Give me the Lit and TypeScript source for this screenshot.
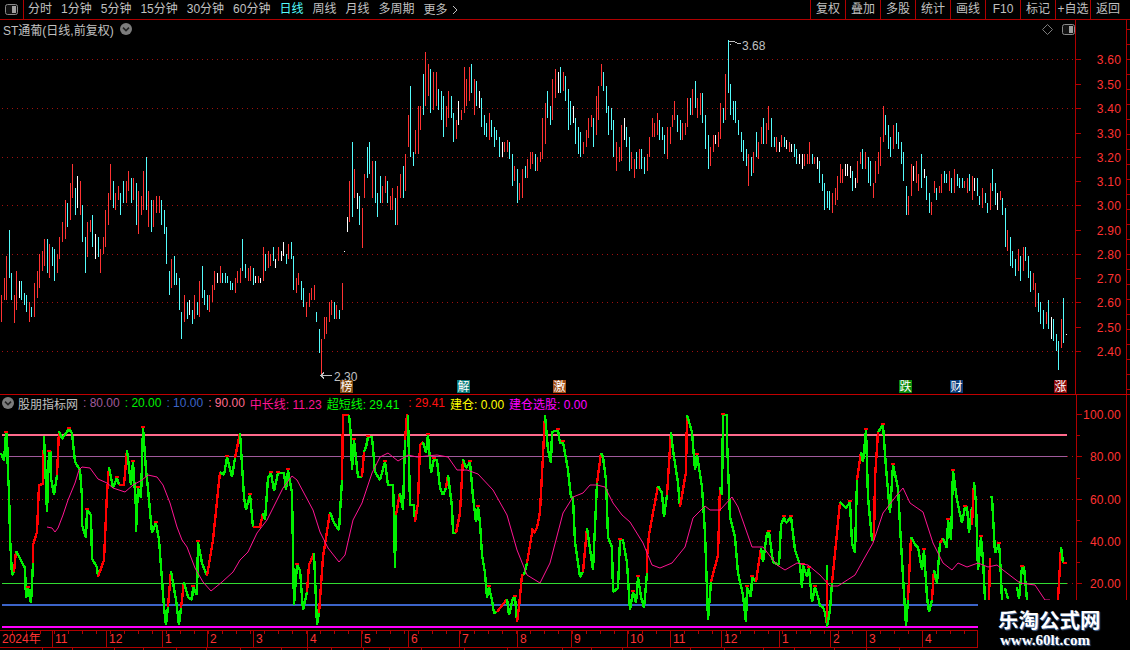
import { css, html, svg, LitElement } from "lit";
import { customElement } from "lit/decorators.js";

const BAR_COLORS: Record<string, string> = { r: "#ff3232", c: "#54fcfc", w: "#ffffff" };

// price bars as <colour>x,top,bottom in page pixels
const BARS = `r1,295,322 r4,278,300 r6,256,300 c9,230,278 c11,273,300 r14,295,323 r16,271,310 w19,281,298 c21,281,300 c24,293,305 c26,295,312 r29,302,322 c31,307,317 r34,283,317 r37,271,298 r39,254,288 r42,251,271 r44,239,266 c47,239,273 r49,244,278 c52,247,266 c54,249,281 r57,254,273 r59,237,259 r62,222,242 r65,200,239 c67,203,227 r70,183,220 r72,164,198 c75,188,215 w77,176,208 r80,181,215 c82,205,242 c85,237,273 r87,222,257 r90,220,232 c92,215,247 w95,234,259 c98,237,257 r100,249,273 r103,237,254 r105,210,247 r108,193,225 r110,164,200 c113,181,208 r115,193,210 r118,186,200 c120,193,215 c123,181,203 r126,181,203 r128,171,191 c131,178,203 r133,178,200 c136,183,225 r138,191,234 r141,196,215 r143,171,210 c146,157,210 r148,191,227 c151,200,232 r153,200,227 r156,196,213 r159,196,213 c161,200,225 c164,210,234 c166,227,264 c169,271,295 r171,259,288 c174,256,285 c176,273,285 c179,278,310 c181,312,339 r184,295,322 c187,302,319 w189,300,315 c192,310,324 r194,295,319 c197,302,315 r199,281,317 c202,266,298 c204,290,305 c207,295,310 r209,295,312 r212,285,302 r214,271,290 w217,273,283 r220,266,283 c222,273,283 c225,273,283 c227,276,283 c230,281,290 c232,283,290 r235,278,293 r237,271,283 r240,268,283 c242,239,271 c245,264,278 r248,268,281 r250,266,281 c253,268,285 w255,276,283 r258,276,283 w260,278,283 r263,247,281 c265,254,271 r268,251,268 r270,254,266 c273,247,261 w275,259,268 r278,247,261 w281,251,261 w283,242,256 c286,254,264 r288,244,259 c291,242,259 c293,256,290 r296,278,293 r298,273,285 c301,281,300 c303,288,307 r306,302,317 r309,293,307 r311,288,300 r314,285,300 c316,312,322 c319,329,353 r321,339,377 r324,317,339 r326,317,334 r329,302,322 r331,300,315 c334,302,319 r336,305,319 c339,310,319 r342,283,310 w344,251,252 w347,217,232 r349,181,222 c352,142,217 r354,169,198 w357,193,209 c359,196,225 r362,208,248 r364,174,198 c367,147,178 c369,142,174 r372,161,198 c375,161,203 c377,193,217 c380,176,203 r382,186,203 r385,176,193 c387,181,203 r390,196,210 r392,188,210 c395,198,225 r397,186,225 r400,174,198 c403,166,198 r405,154,191 r408,115,147 c410,86,157 c413,152,166 r415,130,154 r418,106,154 r420,106,130 c423,74,115 r425,52,106 r428,64,96 c430,69,113 r433,72,110 r436,72,106 c438,89,110 c441,91,120 c443,96,137 r446,106,127 r448,91,118 c451,96,118 c453,113,142 r456,120,139 w458,101,125 r461,110,120 r464,67,113 r466,79,106 r469,67,101 c471,64,93 r474,79,115 c476,81,106 w479,91,108 c481,98,127 c484,115,135 c486,123,137 r489,113,140 c491,120,137 c494,127,147 c496,130,140 c499,137,157 w502,142,157 r504,142,152 r507,140,152 c509,142,159 c512,154,186 r514,166,181 c517,169,203 r519,183,200 r522,169,198 c525,166,178 r527,159,178 r530,152,169 r532,152,164 c535,154,171 r537,157,171 r540,152,162 r542,118,159 r545,103,144 c547,91,118 c550,106,125 r552,79,120 r555,69,98 w558,72,93 c560,67,93 r563,72,91 c565,76,101 c568,89,130 c570,101,125 w573,106,123 c575,118,144 c578,127,154 c580,132,157 r583,142,154 r586,130,147 r588,118,138 r591,115,127 c593,118,147 r596,96,135 r598,86,120 r601,64,86 c603,72,91 c606,86,113 c608,106,135 c611,108,130 c613,120,157 r616,142,171 r619,147,162 r621,125,161 w624,118,140 c626,127,147 c629,137,171 r631,152,169 r634,159,178 c636,152,169 r639,149,169 c641,149,169 c644,157,174 r647,154,171 r649,137,157 r652,118,137 r654,123,137 r657,113,135 c659,120,140 c662,127,140 c664,135,154 r667,127,159 r670,127,144 r672,115,127 r674,101,120 c677,115,132 c680,120,140 r682,123,140 r685,123,135 r687,98,127 c690,98,115 r692,89,115 c695,81,108 r697,98,118 r700,93,115 c702,93,123 c705,115,149 c708,135,169 r710,147,166 r713,135,152 w715,135,144 r718,132,147 r720,103,139 c723,108,123 r725,74,120 c728,40,93 c730,84,115 c733,101,120 c735,101,123 c738,120,135 c741,132,152 c743,140,161 c746,149,166 r748,154,186 c751,157,176 r753,152,173 c756,132,157 r758,142,159 r761,127,144 c763,118,144 r766,123,144 r768,106,130 c771,118,147 c774,137,147 r776,137,152 w779,142,152 r781,135,147 c784,137,147 w786,140,149 r789,142,152 w791,144,152 c794,144,157 c796,149,164 w799,154,164 w802,154,169 r804,154,166 r807,154,164 r809,142,164 c812,154,164 r814,157,164 w817,157,169 c819,161,183 c822,174,191 c824,183,210 c827,191,208 c829,191,210 r832,193,213 r835,188,205 r837,176,200 r840,164,183 r842,169,183 w845,164,176 w847,164,176 w850,166,178 c852,171,191 w855,178,188 r857,161,183 r860,152,164 c862,149,169 r865,152,169 c868,157,183 c870,161,186 r873,183,198 r875,161,183 r878,152,174 r880,137,166 r883,106,142 c885,115,135 c888,125,149 c890,137,157 r893,125,149 c896,123,144 c898,132,149 c901,142,164 c903,152,181 c906,186,215 r908,196,215 r911,164,196 w913,166,181 r916,161,183 r918,174,191 c921,154,188 w924,169,178 c926,176,200 c929,193,213 r931,202,215 r934,181,193 c936,188,200 r939,186,193 r941,174,193 c944,171,183 c946,174,183 r949,171,191 c951,178,193 r954,169,193 c957,174,186 c959,178,188 c962,178,188 r964,181,188 r967,178,193 c969,174,191 r972,176,200 w974,178,191 c977,178,196 c979,196,205 r982,188,208 c985,193,203 c987,203,213 r990,183,210 c992,169,191 c995,183,205 w997,193,210 r1000,191,200 c1002,198,215 c1005,208,247 r1007,230,251 c1010,237,266 c1012,251,268 c1015,259,276 r1018,249,271 c1020,256,281 r1023,247,271 c1025,247,261 c1028,256,278 c1030,271,292 r1033,273,290 r1035,283,307 c1038,293,312 c1040,302,324 c1043,310,329 r1046,312,324 c1048,300,329 w1051,317,339 c1053,319,341 c1056,334,351 c1058,341,370 r1061,319,348 c1063,298,343 w1066,334,335`;

// 超短线 as consecutive green / red runs
const RUNS: [string, string][] = [
  ["g", "1,453 4,461 6,433 7,433 8,476 9,490 10,537 12,575 14,572"],
  ["r", "14,572 16,551"],
  ["g", "16,551 25,568 26,598 28,588 31,603 33,563"],
  ["r", "33,563 33,545 37,532 39,485 43,484 44,436"],
  ["g", "44,436 47,512 49,452 51,452 51,478 54,495 57,475"],
  ["r", "57,475 59,431"],
  ["g", "59,431 62,439 69,429 72,433 75,462 80,470 82,497 82,525 86,538 87,510 91,515 92,559 97,567 98,577"],
  ["r", "98,577 104,560 107,493 109,467"],
  ["g", "109,467 113,488 117,478 119,485"],
  ["r", "119,485 124,485 127,450"],
  ["g", "127,450 131,485 133,462 136,508 136,532 138,488 141,498 143,428 146,470 148,489 152,533 156,523 159,540 162,580 164,607 166,625 168,607"],
  ["r", "168,607 171,571"],
  ["g", "171,571 176,600 179,625 181,608"],
  ["r", "181,608 184,582"],
  ["g", "184,582 188,597 192,600 193,587 197,595 198,542 202,563 207,576"],
  ["r", "207,576 213,540 220,472"],
  ["g", "220,472 224,475 227,457 232,477 235,458"],
  ["r", "235,458 240,433"],
  ["g", "240,433 244,497 246,510 250,495 253,527"],
  ["r", "253,527 260,527 263,513"],
  ["g", "263,513 265,520 268,478 271,473 274,491 278,473 284,473 286,490 288,470 292,493 293,550 294,605 297,565 300,570 303,610 307,592"],
  ["r", "307,592 309,565 314,553"],
  ["g", "314,553 317,625 319,613"],
  ["r", "319,613 323,557 330,512"],
  ["g", "330,512 334,523 339,530 342,480"],
  ["r", "342,480 343,415 349,415"],
  ["g", "349,415 351,437 352,470 354,440 358,477 362,477"],
  ["r", "362,477 364,452"],
  ["g", "364,452 366,447 368,437 372,437 375,472 380,480 385,462 388,485 393,485 394,515 395,568 396,515"],
  ["r", "396,515 400,493"],
  ["g", "400,493 403,510 405,440"],
  ["r", "405,440 407,415 408,415"],
  ["g", "408,415 410,505 414,505 415,522"],
  ["r", "415,522 418,503 420,445 423,442"],
  ["g", "423,442 426,453 428,435 431,473 434,459 437,460 440,488 443,495 446,488"],
  ["r", "446,488 448,475"],
  ["g", "448,475 452,507 453,533 456,533"],
  ["r", "456,533 460,513 463,459"],
  ["g", "463,459 466,468 470,462 473,497 476,522 478,507 480,523 482,555 485,573 487,598 489,587 492,600 494,613 497,612"],
  ["r", "497,612 507,599"],
  ["g", "507,599 509,615 513,598 515,597 517,622"],
  ["r", "517,622 519,607 522,575 524,575"],
  ["g", "524,575 527,563"],
  ["r", "527,563 532,533 532,528 534,533 537,528 540,512 543,455 545,415"],
  ["g", "545,415 548,450 551,463 552,432 558,430 560,443 563,442 568,470 571,497 573,498 575,542 580,577 583,572"],
  ["r", "583,572 587,528"],
  ["g", "587,528 593,570 597,483"],
  ["r", "597,483 601,453"],
  ["g", "601,453 603,457 606,480 608,537 612,547 613,592 618,588 620,540 623,540 627,563 630,610 633,592 636,603 638,577 641,597 644,608 647,573"],
  ["r", "647,573 647,557 649,535 653,513 658,486"],
  ["g", "658,486 662,493 664,517 667,495"],
  ["r", "667,495 671,432"],
  ["g", "671,432 673,450 678,483 680,507"],
  ["r", "680,507 686,472 687,415"],
  ["g", "687,415 692,432 695,470 697,455 702,487 705,533 708,620 711,582"],
  ["r", "711,582 718,555 720,487"],
  ["g", "720,487 722,495 723,415 727,415 727,440 730,517 735,537 738,573 743,595 746,622 747,587 751,597 752,577 756,582"],
  ["r", "756,582 761,548"],
  ["g", "761,548 763,562 767,533 769,532 773,562 779,565 781,525 784,517 786,523 791,517 795,550 800,565 802,588 803,565 807,577 809,568 812,602 815,587 818,597 820,606 823,607 825,613 827,625"],
  ["g", "827,565 827,580"],
  ["r", "827,580 827,627"],
  ["g", "827,627 830,610 832,583"],
  ["r", "832,583 837,533 840,502"],
  ["g", "840,502 846,508 850,502 852,543 855,553 857,480"],
  ["r", "857,480 861,452"],
  ["g", "861,452 863,462 866,430 868,497 872,540 874,540"],
  ["r", "874,540 875,478 878,432"],
  ["g", "878,432 883,425 886,468 890,513 893,465 898,488 901,543 903,577 906,626 908,600"],
  ["r", "908,600 911,537"],
  ["g", "911,537 916,546 918,547 922,570 924,550 927,597 929,612 932,600"],
  ["r", "932,600 934,570"],
  ["g", "934,570 937,583 940,543"],
  ["r", "940,543 943,538"],
  ["g", "943,538 947,548 948,520 951,540 953,471 957,500 962,523 965,507 967,507 969,533 972,507"],
  ["r", "972,525 974,482"],
  ["g", "974,482 976,503 978,570 981,537 983,560 985,600"],
  ["r", "989,600 990,558"],
  ["g", "990,497 992,497 995,553 999,544 1000,557 1002,600"],
  ["g", "1005,588 1008,599"],
  ["g", "1017,587 1019,599 1022,567 1024,567 1027,600"],
  ["r", "1058,600 1061,547"],
  ["g", "1061,547 1063,563"],
  ["r", "1063,563 1067,563"],
];

const LONG_LINE =
  "47,527 52,528 55,532 58,528 63,515 68,500 75,483 79,470 82,467 90,468 98,479 107,483 113,488 125,492 133,485 142,480 148,475 157,477 163,485 170,503 177,527 182,540 187,547 195,568 203,582 211,591 222,582 233,572 240,560 248,552 257,533 267,520 283,488 292,476 297,480 305,495 313,510 320,532 328,548 339,562 345,555 353,520 362,503 372,473 380,457 388,453 398,461 408,455 417,457 437,455 448,457 457,470 467,470 478,474 493,490 507,515 517,550 527,575 540,583 550,563 563,513 573,497 583,493 590,485 597,485 605,487 613,503 622,515 630,522 643,543 652,565 660,568 672,563 685,547 693,518 705,506 710,510 720,510 732,497 738,507 752,547 763,547 777,565 785,570 797,563 808,565 820,575 830,586 838,586 855,575 865,557 873,543 883,513 897,495 903,488 910,503 923,512 933,543 943,563 952,570 958,563 967,567 978,563 988,567 997,565 1003,570 1020,583 1035,585 1045,600 1050,600";

const PRICE_LABELS = ["3.60", "3.50", "3.40", "3.30", "3.20", "3.10", "3.00", "2.90", "2.80", "2.70", "2.60", "2.50", "2.40"];
const PRICE_Y = [59, 84, 108, 133, 157, 181, 205, 230, 254, 278, 302, 327, 351];
const VALUE_LABELS: [string, number][] = [["100.00", 414], ["80.00", 456], ["60.00", 499], ["40.00", 541], ["20.00", 583]];
const VALUE_MINOR = [435, 478, 520, 562];
const VALUE_GRID = [456, 499, 541, 583];

const TAGS: [string, number, string][] = [
  ["榜", 340, "#80480e"],
  ["解", 457, "#087a7a"],
  ["激", 553, "#a04e18"],
  ["跌", 899, "#0a8a0a"],
  ["财", 950, "#0a3c78"],
  ["涨", 1054, "#8a0808"],
];

const TABS = ["分时", "1分钟", "5分钟", "15分钟", "30分钟", "60分钟", "日线", "周线", "月线", "多周期", "更多"];
const BUTTONS = ["复权", "叠加", "多股", "统计", "画线", "F10", "标记", "+自选", "返回"];

const MONTHS: [string, number][] = [
  ["2024年", 53], ["11", 54], ["12", 56], ["1", 45], ["2", 46], ["3", 54], ["4", 54], ["5", 47], ["6", 51],
  ["7", 58], ["8", 54], ["9", 56], ["10", 43], ["11", 51], ["12", 58], ["1", 51], ["2", 36], ["3", 56], ["4", 54],
];
const STRIP = [43, 30, 42, 29, 33, 30, 34, 41, 26, 24, 32, 26, 32, 43, 43, 55, 29, 31, 68, 34, 39, 31, 40, 32, 33, 105];

const LEGEND: [string, string][] = [
  [": 80.00", "#a05a9b"],
  [": 20.00", "#00f000"],
  [": 10.00", "#3c64c8"],
  [": 90.00", "#ff6a8c"],
  ["中长线: 11.23", "#ff1493"],
  ["超短线: 29.41", "#00ff00"],
  [": 29.41", "#ff1010"],
  ["建仓: 0.00", "#ffff00"],
  ["建仓选股: 0.00", "#ff00ff"],
];

const chevron = html`<svg class="chev" width="12" height="12" viewBox="0 0 12 12">
  <circle cx="6" cy="6" r="6" fill="#7c7c7c" />
  <path d="M3 4.6 6 7.6 9 4.6" fill="none" stroke="#222" stroke-width="1.6" />
</svg>`;

const panelIcon = html`<svg width="13" height="11" viewBox="0 0 13 11">
  <rect x="0.5" y="0.5" width="12" height="10" rx="2" fill="#111" stroke="#8a8a8a" />
  <rect x="7" y="2" width="4" height="7" fill="#a0a0a0" />
</svg>`;

function peakCaps(points: string) {
  const pts = points.split(" ").map((p) => p.split(",").map(Number));
  return pts.filter((p, i) => i > 0 && i < pts.length - 1 && p[1] < pts[i - 1][1] && p[1] <= pts[i + 1][1]);
}

@customElement("app-root")
export class AppRoot extends LitElement {
  static styles = css`
    :host {
      display: block;
      position: relative;
      width: 1130px;
      height: 650px;
      overflow: hidden;
      background: #000;
      color: #c0c0c0;
      font: 12px "Liberation Sans", "Noto Sans CJK SC", sans-serif;
    }

    .toolbar {
      display: flex;
      height: 19px;
      line-height: 18px;
      border-bottom: 1px solid #b00000;
    }
    .corner {
      display: flex;
      align-items: center;
      justify-content: center;
      width: 23px;
      border-right: 1px solid #b00000;
    }
    .tabs {
      display: flex;
      gap: 9px;
      padding-left: 4px;
      flex: 1;
    }
    .tabs .active {
      color: #54fcfc;
    }
    .more {
      display: flex;
      align-items: center;
      gap: 4px;
    }
    .buttons {
      display: flex;
      padding-right: 5px;
    }
    .buttons span {
      width: 35px;
      box-sizing: border-box;
      text-align: center;
      border-left: 1px solid #b00000;
    }

    .pane {
      position: relative;
      border-bottom: 1px solid #c00000;
    }
    .pane svg.chart {
      display: block;
    }
    .price {
      height: 374px;
    }
    .indicator {
      height: 235px;
      border-bottom: 0;
    }
    .title {
      position: absolute;
      top: 1px;
      left: 3px;
      display: flex;
      align-items: center;
      gap: 6px;
      height: 16px;
    }
    .corner-tools {
      position: absolute;
      top: 4px;
      left: 1042px;
      display: flex;
      align-items: center;
      gap: 9px;
    }
    .legend {
      position: absolute;
      top: 0;
      left: 2px;
      display: flex;
      align-items: center;
      height: 16px;
      gap: 5px;
      white-space: nowrap;
    }
    .legend .name {
      margin-left: -1px;
    }
    .legend .gapped {
      margin-left: 4px;
    }
    .chev {
      display: block;
    }

    .time {
      display: flex;
      width: 977px;
      height: 16px;
      line-height: 17px;
      border-top: 1px solid #b00000;
      border-bottom: 1px solid #b00000;
      border-right: 1px solid #b00000;
      background: repeating-linear-gradient(90deg, #b00000 0 1px, transparent 1px 14px) 12px 0 / 100% 3px no-repeat;
      color: #ff3232;
    }
    .time span {
      box-sizing: border-box;
      padding-left: 2px;
      border-right: 1px solid #b00000;
      white-space: nowrap;
    }
    .time span:last-child {
      border-right: 0;
    }
    .strip {
      display: flex;
      height: 2px;
      overflow: hidden;
    }
    .strip span {
      box-sizing: border-box;
      border-right: 1px solid #b00000;
    }

    .watermark {
      position: absolute;
      right: 0;
      bottom: 0;
      width: 152px;
      height: 50px;
      box-sizing: border-box;
      padding: 7px 0 0 20px;
      background: #000;
      color: #fff;
      white-space: nowrap;
    }
    .watermark b {
      display: block;
      font: bold 20.5px/24px "Noto Sans CJK SC", sans-serif;
      text-shadow: 1px 1px 1px #4a6a9a;
    }
    .watermark i {
      display: block;
      margin: 2px 0 0 2px;
      font: bold 15px/15px "Liberation Serif", serif;
      text-shadow: 1px 1px 1px #4a6a9a;
    }

    text {
      font: 12px "Liberation Sans", "Noto Sans CJK SC", sans-serif;
    }
    .lbl {
      fill: #ff3232;
      text-anchor: end;
      letter-spacing: 0.2px;
    }
    .note {
      fill: #c0c0c0;
    }
    .tag {
      fill: #fff;
      text-anchor: middle;
    }
  `;

  priceChart() {
    const bars = BARS.split(" ").map((b) => {
      const [x, top, bottom] = b.slice(1).split(",").map(Number);
      return svg`<rect x=${x} y=${top} width="1" height=${bottom - top} fill=${BAR_COLORS[b[0]]} />`;
    });
    const minor = [84, 133, 181, 230, 278, 327];
    const outerTicks = Array.from({ length: 25 }, (_, i) => 29 + i * 15);
    return html`<svg class="chart" width="1130" height="374" viewBox="0 20 1130 374" shape-rendering="crispEdges">
      ${PRICE_Y.filter((_, i) => i % 2 === 0).map(
        (y) => svg`<line x1="2" x2="1075" y1=${y + 0.5} y2=${y + 0.5} stroke="#a01010" stroke-dasharray="1 4" />`
      )}
      <rect x="1075" y="20" width="1" height="374" fill="#b00000" />
      <rect x="1126" y="20" width="1" height="374" fill="#b00000" />
      ${outerTicks.map((y) => svg`<rect x="1127" y=${y} width="3" height="1" fill="#b00000" />`)}
      ${PRICE_Y.map(
        (y, i) => svg`<rect x="1076" y=${y} width="5" height="1" fill="#b00000" />
          <text class="lbl" x="1121" y=${y + 4.5}>${PRICE_LABELS[i]}</text>`
      )}
      ${minor.map((y) => svg`<rect x="1076" y=${y} width="3" height="1" fill="#b00000" />`)}
      ${bars}
      <path d="M729 41h4l4 2 4 1M730 44h1" fill="none" stroke="#c0c0c0" />
      <text class="note" x="742" y="50">3.68</text>
      <path d="M321 375.5h11M324 372.5l-3 3 3 3" fill="none" stroke="#c0c0c0" />
      <text class="note" x="334" y="381">2.30</text>
      ${TAGS.map(
        ([t, x, c]) => svg`<rect x=${x} y="380" width="13" height="13" fill=${c} />
          <text class="tag" x=${x + 6.5} y="391">${t}</text>`
      )}
    </svg>`;
  }

  indicatorChart() {
    const colors: Record<string, string> = { g: "#00f000", r: "#ff0000" };
    return html`<svg class="chart" width="1130" height="235" viewBox="0 395 1130 235">
      <g shape-rendering="crispEdges">
        ${VALUE_GRID.map(
          (y) => svg`<line x1="2" x2="1075" y1=${y + 0.5} y2=${y + 0.5} stroke="#a01010" stroke-dasharray="1 4" />`
        )}
        <rect x="2" y="434" width="1065" height="2" fill="#ff6a8c" />
        <rect x="2" y="456" width="1065" height="1" fill="#a05a9b" />
        <rect x="2" y="583" width="1065" height="1" fill="#32dc32" />
        <rect x="2" y="604" width="1065" height="2" fill="#3c64c8" />
        <rect x="2" y="626" width="1065" height="2" fill="#ff00ff" />
        <rect x="1076" y="395" width="1" height="235" fill="#b00000" />
        <rect x="1126" y="395" width="1" height="235" fill="#b00000" />
        ${VALUE_LABELS.map(
          ([t, y]) => svg`<rect x="1077" y=${y} width="5" height="1" fill="#b00000" />
            <text class="lbl" x="1121" y=${y + 4.5}>${t}</text>`
        )}
        ${VALUE_MINOR.map((y) => svg`<rect x="1077" y=${y} width="3" height="1" fill="#b00000" />`)}
      </g>
      <g fill="none" stroke-width="2.4" stroke-linejoin="bevel" shape-rendering="crispEdges">
        ${RUNS.map(([c, pts]) => svg`<polyline points=${pts} stroke=${colors[c]} />`)}
        ${RUNS.filter(([c]) => c === "g").flatMap(([, pts]) =>
          peakCaps(pts).map((p) => svg`<rect x=${p[0] - 2} y=${p[1] - 2} width="4" height="2" fill="#ff0000" />`)
        )}
      </g>
      <polyline points=${LONG_LINE} fill="none" stroke="#ff1493" stroke-width="1" />
    </svg>`;
  }

  render() {
    return html`
      <div class="toolbar">
        <div class="corner">${panelIcon}</div>
        <div class="tabs">
          ${TABS.map((t) =>
            t === "更多"
              ? html`<span class="more">${t}
                  <svg width="6" height="10" viewBox="0 0 6 10"><path d="M1 1l4 4-4 4" fill="none" stroke="#c0c0c0" /></svg>
                </span>`
              : html`<span class=${t === "日线" ? "active" : ""}>${t}</span>`
          )}
        </div>
        <div class="buttons">${BUTTONS.map((b) => html`<span>${b}</span>`)}</div>
      </div>

      <section class="pane price">
        ${this.priceChart()}
        <div class="title">ST通葡(日线,前复权) ${chevron}</div>
        <div class="corner-tools">
          <svg width="11" height="11" viewBox="0 0 11 11"><path d="M5.5 .5l5 5-5 5-5-5z" fill="none" stroke="#7c7c7c" /></svg>
          ${panelIcon}
        </div>
      </section>

      <section class="pane indicator">
        ${this.indicatorChart()}
        <div class="legend">
          ${chevron}
          <span class="name">股朋指标网</span>
          ${LEGEND.map(([t, c], i) => html`<span class=${i === 6 ? "gapped" : ""} style="color:${c}">${t}</span>`)}
        </div>
      </section>

      <div class="time">${MONTHS.map(([m, w]) => html`<span style="width:${w}px">${m}</span>`)}</div>
      <div class="strip">${STRIP.map((w) => html`<span style="width:${w}px"></span>`)}</div>

      <div class="watermark"><b>乐淘公式网</b><i>www.60lt.com</i></div>
    `;
  }
}
